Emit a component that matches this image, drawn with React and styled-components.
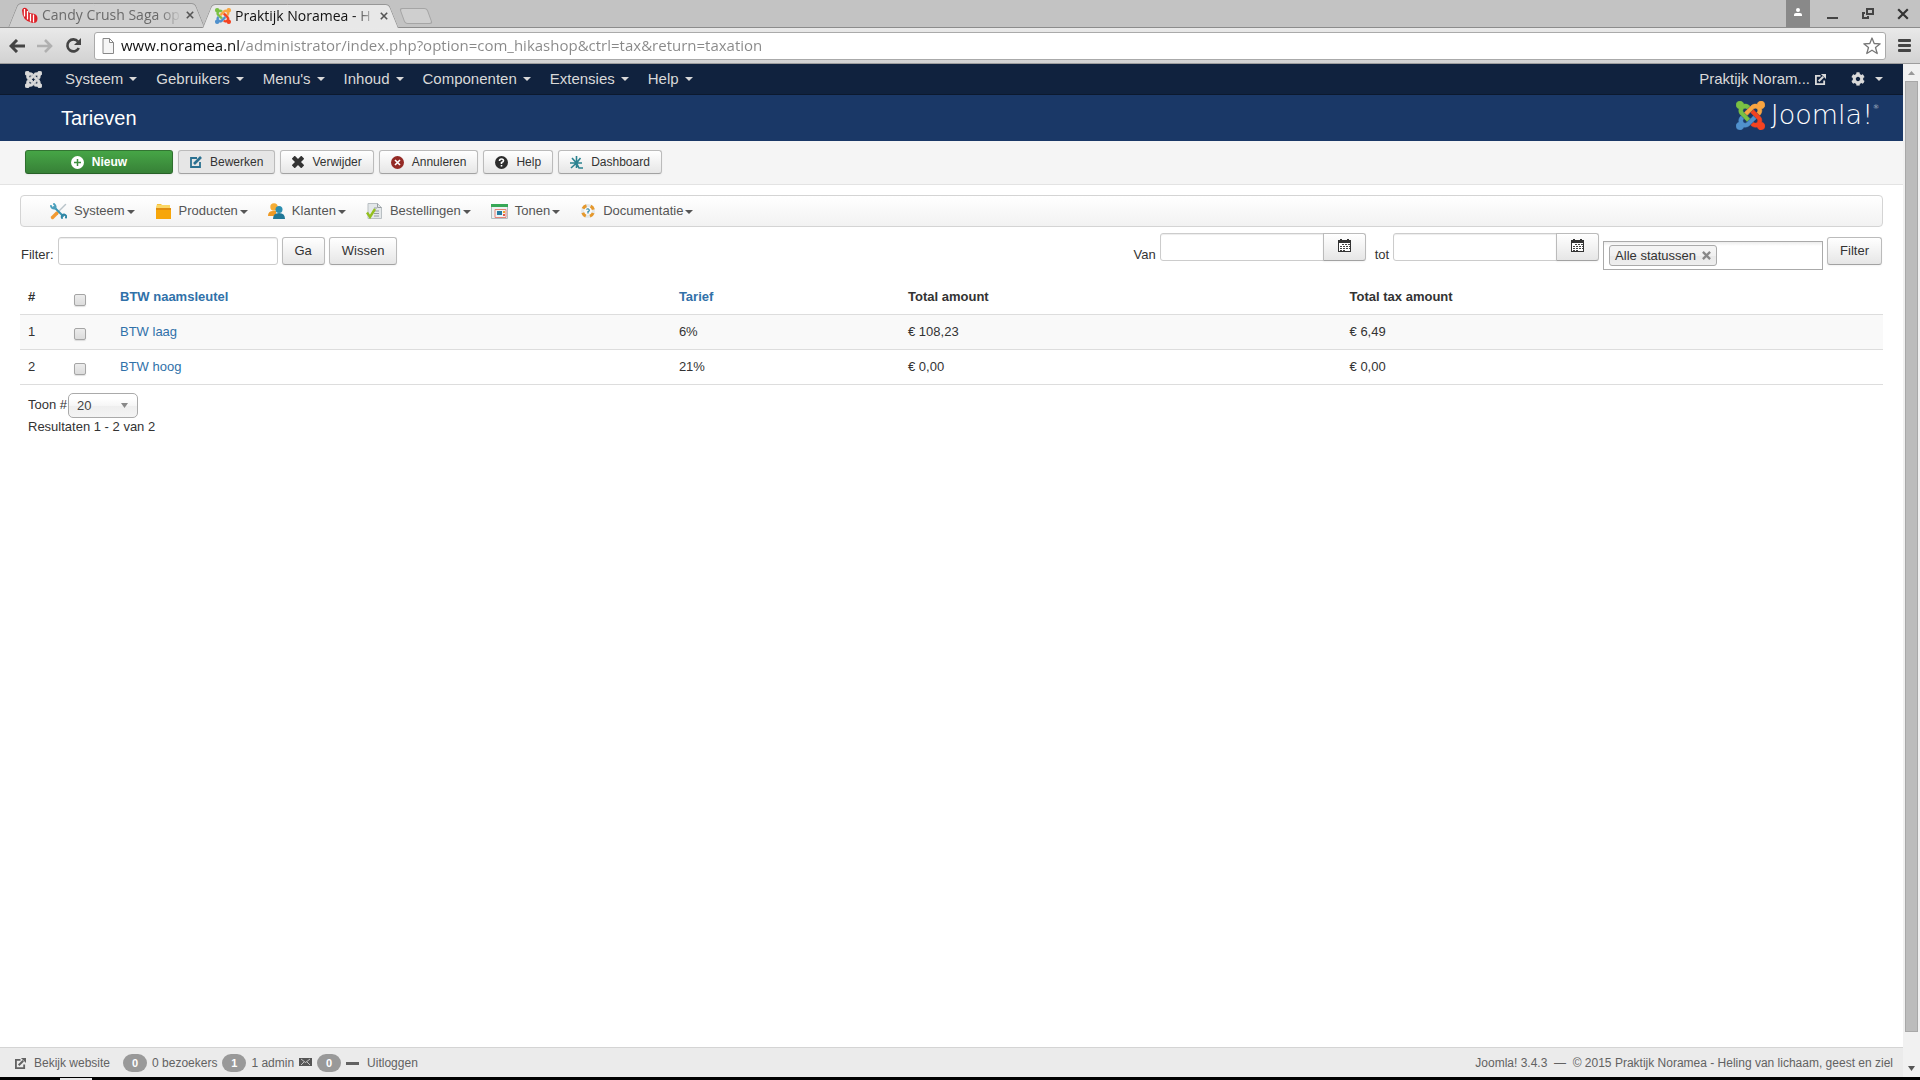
import React from "react";
import styled, { createGlobalStyle } from "styled-components";
import { FaCog } from "react-icons/fa";

const GlobalStyle = createGlobalStyle`
  *, *::before, *::after { box-sizing: border-box; }
  body {
    margin: 0;
    font-family: "Liberation Sans", Arial, sans-serif;
    font-size: 13px;
    line-height: 18px;
    color: #333;
    background: #fff;
    overflow: hidden;
  }
  button, input, select { font-family: inherit; font-size: inherit; color: inherit; margin: 0; }
  a { text-decoration: none; }
  svg { display: block; flex: none; }
`;

const Window = styled.div`
  display: flex;
  flex-direction: column;
  height: 100vh;
`;

/* ---------- Browser frame ---------- */

const TabStrip = styled.div`
  display: flex;
  flex: none;
  justify-content: space-between;
  height: 28px;
  background: #c3c3c3;
  border-bottom: 1px solid #8c8c8c;
  font-family: "Open Sans", "Noto Sans", sans-serif;
`;

const Tabs = styled.div`
  display: flex;
  align-items: flex-end;
  padding-left: 8px;
`;

const Tab = styled.div`
  position: relative;
  z-index: ${(p) => (p.$active ? 2 : 1)};
  display: flex;
  align-items: center;
  gap: 4px;
  width: 197px;
  height: 24px;
  margin-right: -3px;
  margin-bottom: ${(p) => (p.$active ? "-1px" : "0")};
  padding: 0 11px 0 13px;
  color: ${(p) => (p.$active ? "#111" : "#6a6a6a")};

  &::before, &::after {
    content: "";
    position: absolute;
    z-index: -1;
    top: 0;
    bottom: 0;
    width: 52%;
    background: ${(p) => (p.$active ? "#e8e8e8" : "#cfcfcf")};
    border: 0 solid #979797;
    border-top-width: 1px;
  }
  &::before {
    left: 5px;
    transform: skewX(-22deg);
    border-left-width: 1px;
    border-top-left-radius: 4px;
  }
  &::after {
    right: 5px;
    transform: skewX(22deg);
    border-right-width: 1px;
    border-top-right-radius: 4px;
  }
`;

const TabTitle = styled.span`
  flex: 1;
  white-space: nowrap;
  font-size: 14px;
  line-height: 20px;
  mask-image: linear-gradient(90deg, #000 84%, transparent);
`;

const GhostButton = styled.button`
  display: flex;
  align-items: center;
  justify-content: center;
  padding: 0;
  border: 0;
  background: none;
  color: ${(p) => p.$color || "#555"};
`;

const NewTab = styled.button`
  width: 28px;
  height: 16px;
  margin: 0 0 3px 6px;
  padding: 0;
  background: #cfcfcf;
  border: 1px solid #a5a5a5;
  border-radius: 3px;
  transform: skewX(20deg);
`;

const WindowButtons = styled.div`
  display: flex;

  ${GhostButton} { width: 35px; }
  ${GhostButton}:first-child {
    width: 24px;
    margin-right: 5px;
    background: #898989;
  }
`;

const BrowserBar = styled.div`
  display: flex;
  flex: none;
  align-items: center;
  gap: 12px;
  height: 36px;
  padding: 0 9px;
  background: linear-gradient(#e9e9e9, #d2d2d2);
  border-bottom: 1px solid #9d9d9d;
`;

const AddressBox = styled.label`
  display: flex;
  flex: 1;
  align-items: center;
  height: 28px;
  padding: 0 4px 0 7px;
  background: #fff;
  border: 1px solid #aaa;
  border-radius: 3px;
`;

const AddressInput = styled.input`
  flex: 1;
  min-width: 0;
  height: 24px;
  padding: 0 0 2px 6px;
  border: 0;
  outline: 0;
  font-family: "Open Sans", "Noto Sans", sans-serif;
  font-size: 15px;
  color: transparent;
  background: linear-gradient(90deg, #111 0 125px, #888 125px);
  background-clip: text;
`;

const Viewport = styled.div`
  display: flex;
  flex: 1;
  min-height: 0;
`;

const Scrollbar = styled.div`
  display: flex;
  flex-direction: column;
  align-items: center;
  width: 17px;
  background: #f1f1f1;
`;

const ScrollThumb = styled.div`
  flex: 1;
  width: 13px;
  margin-bottom: 28px;
  background: #bcbcbc;
  border: 1px solid #a8a8a8;
`;

const ScrollButton = styled(GhostButton)`
  width: 17px;
  height: 17px;
`;

const Taskbar = styled.div`
  flex: none;
  height: 3px;
  padding: 1px 0 0 60px;
  background: #000;

  &::before {
    content: "";
    display: block;
    width: 32px;
    height: 2px;
    background: #e8e8e8;
  }
`;

/* ---------- Administrator page ---------- */

const Page = styled.div`
  display: flex;
  flex: 1;
  flex-direction: column;
  min-width: 0;
`;

const Caret = styled.span`
  display: inline-block;
  border: 4px solid transparent;
  border-top-color: currentColor;
  border-bottom: 0;
`;

const NavBar = styled.nav`
  display: flex;
  align-items: center;
  height: 31px;
  padding: 0 20px 0 25px;
  background: #10223e;
  border-bottom: 1px solid #0c192e;
  color: #d9d9d9;
  font-size: 15px;
`;

const NavLink = styled.a`
  display: flex;
  align-items: center;
  gap: 6px;
  margin-right: 19px;
  color: inherit;
`;

const HomeLink = styled(NavLink)`
  margin-right: 23px;
`;

const NavRight = styled.div`
  display: flex;
  align-items: center;
  margin-left: auto;

  ${NavLink} { gap: 5px; }
  ${NavLink}:last-child { margin: 0 0 0 6px; gap: 10px; }
`;

const Header = styled.header`
  display: flex;
  align-items: center;
  justify-content: space-between;
  height: 46px;
  padding: 0 24px 0 61px;
  background: #1a3867;
  color: #fff;
`;

const Title = styled.h1`
  margin: 0;
  font-size: 20px;
  line-height: 26px;
  font-weight: 400;
`;

const Brand = styled.a`
  display: flex;
  align-items: center;
  gap: 6px;
  padding-bottom: 6px;
  color: #fff;
`;

const BrandName = styled.span`
  display: flex;
  font-family: "DejaVu Sans", sans-serif;
  font-size: 27px;
  line-height: 30px;
  font-weight: 200;

  sup { font-size: 6px; line-height: 14px; }
`;

const Toolbar = styled.div`
  display: flex;
  gap: 5px;
  padding: 9px 25px;
  height: 44px;
  background: #f5f5f5;
  border-bottom: 1px solid #e3e3e3;
`;

const Button = styled.button`
  display: flex;
  align-items: center;
  justify-content: center;
  height: 28px;
  padding: 0 12px;
  background: linear-gradient(#fff, #e6e6e6);
  border: 1px solid #bbb;
  border-bottom-color: #a2a2a2;
  border-radius: 3px;
  box-shadow: 0 1px 2px rgba(0, 0, 0, 0.05);
  line-height: 18px;
  white-space: nowrap;
`;

const ToolButton = styled(Button)`
  height: 24px;
  gap: 8px;
  padding: 0 11px;
  font-size: 12px;
  ${(p) => p.$pressed && "background: #e6e6e6;"}
  ${(p) =>
    p.$primary &&
    `
    width: 148px;
    color: #fff;
    font-weight: 700;
    background: linear-gradient(#46a546, #378137);
    border-color: #327532 #2f6f2f #276127;
  `}
`;

const Content = styled.main`
  flex: 1;
  padding: 10px 20px 0;
`;

const HikaMenu = styled.nav`
  display: flex;
  gap: 20px;
  height: 32px;
  padding: 0 29px;
  background: linear-gradient(#fff, #f2f2f2);
  border: 1px solid #d4d4d4;
  border-radius: 4px;
`;

const HikaLink = styled.a`
  display: flex;
  align-items: center;
  color: #555;

  svg { margin-right: 7px; }
  ${Caret} { margin: 2px 0 0 2px; border-width: 4px; border-bottom-width: 0; }
`;

const Filters = styled.form`
  display: flex;
  justify-content: space-between;
  padding-top: 6px;
  height: 52px;
`;

const FilterGroup = styled.div`
  display: flex;
  align-items: flex-start;
  gap: 4px;
  padding: ${(p) => (p.$left ? "4px 0 0 1px" : "0 1px 0 0")};
`;

const FieldLabel = styled.label`
  padding-top: ${(p) => (p.$late ? "13px" : "9px")};
  margin-left: ${(p) => (p.$late ? "5px" : "0")};
`;

const TextField = styled.input`
  width: ${(p) => p.$width};
  height: 28px;
  padding: 4px 6px;
  background: #fff;
  border: 1px solid #ccc;
  border-radius: 3px;
  box-shadow: inset 0 1px 1px rgba(0, 0, 0, 0.075);
  outline: 0;
`;

const DateField = styled.div`
  display: flex;

  ${TextField} { border-radius: 3px 0 0 3px; }
  ${Button} {
    width: 43px;
    padding: 0 0 4px;
    margin-left: -1px;
    border-radius: 0 3px 3px 0;
  }
`;

const StatusBox = styled.div`
  display: flex;
  width: 220px;
  height: 29px;
  margin-top: 8px;
  padding: 3px 5px;
  border: 1px solid #aaa;
  background: linear-gradient(#eee 1%, #fff 15%);
`;

const Chip = styled.span`
  display: flex;
  align-items: center;
  gap: 6px;
  height: 21px;
  padding: 0 5px;
  background: linear-gradient(#f4f4f4 20%, #f0f0f0 50%, #e8e8e8 52%, #eee);
  border: 1px solid #aaa;
  border-radius: 3px;
  white-space: nowrap;
`;

const DropdownAligned = styled.div`
  padding-top: 4px;
`;

const Table = styled.table`
  width: 100%;
  table-layout: fixed;
  border-collapse: collapse;

  th, td {
    height: 35px;
    padding: 8px;
    text-align: left;
    line-height: 18px;
    border-bottom: 1px solid #ddd;
  }
  th { padding: 9px 8px 7px; }
  tbody tr:first-child { background: #f9f9f9; }
`;

const Col = styled.col`
  width: ${(p) => p.$width};
`;

const Link = styled.a`
  color: #3071a9;
`;

const Check = styled.input`
  appearance: none;
  display: block;
  width: 12px;
  height: 12px;
  margin: 5px 0 0;
  background: linear-gradient(#ececec, #dcdcdc);
  border: 1px solid #a5a5a5;
  border-radius: 2px;
  box-shadow: 0 1px 1px rgba(0, 0, 0, 0.12);
`;

const Paging = styled.div`
  padding: 8px;
`;

const PagingRow = styled.div`
  display: flex;
  gap: 1px;
  line-height: 24px;
`;

const SelectWrap = styled.span`
  display: flex;
  align-items: center;
  width: 70px;
  height: 25px;
  padding-right: 9px;
  background: linear-gradient(#fff 20%, #f6f6f6 50%, #eee 52%, #f4f4f4);
  border: 1px solid #aaa;
  border-radius: 5px;
  color: #888;
`;

const Select = styled.select`
  appearance: none;
  flex: 1;
  min-width: 0;
  padding: 0 0 0 8px;
  border: 0;
  outline: 0;
  background: none;
  color: #444;
`;

const StatusBar = styled.footer`
  display: flex;
  align-items: center;
  justify-content: space-between;
  height: 30px;
  padding: 1px 10px 0 15px;
  background: #ebebeb;
  border-top: 1px solid #d4d4d4;
  color: #626262;
  font-size: 12px;
`;

const StatusGroup = styled.div`
  display: flex;
  align-items: center;
  gap: 5px;
`;

const StatusLink = styled.a`
  display: flex;
  align-items: center;
  gap: 8px;
  margin-right: ${(p) => (p.$spaced ? "8px" : "0")};
  color: inherit;
`;

const Badge = styled.span`
  width: 24px;
  border-radius: 9px;
  background: #999;
  color: #fff;
  font-size: 11px;
  line-height: 18px;
  font-weight: 700;
  text-align: center;
`;

/* ---------- Drawings ---------- */

const joomlaParts = [
  ["#7ac143", "M.6 92.1C.6 58.8 27.4 32 60.4 32c30 0 54.5 21.9 59.2 50.2 32.6-7.6 67.1.6 96.5 30l-44.3 44.3c-20.5-20.5-42.6-16.3-55.4-3.5-14.3 14.3-14.3 37.9 0 52.2l99.5 99.5-44 44.3c-87.7-87.2-49.7-49.7-99.8-99.7-26.8-26.5-35-64.8-24.8-98.9C20.4 144.6.6 120.7.6 92.1z"],
  ["#f9a541", "M130.1 208.5l44.3 44.3c10-10 89.7-89.7 99.7-99.8 14.3-14.3 37.6-14.3 51.9 0 12.8 12.8 17 35-3.5 55.4l44 44.3c31.2-31.2 38.5-67.6 28.9-101.2 29.2-4.1 51.9-29.2 51.9-59.5 0-33.2-26.8-60.1-59.8-60.1-30.3 0-55.4 22.5-59.5 51.6-33.8-9.9-71.7-1.5-98.3 25.1-18.3 19.1-71.1 71.5-99.6 99.9z"],
  ["#f44321", "M396.4 360.7c8.2-32.7-.9-68.5-26.3-93.9-11.8-12.2 5 4.7-99.5-99.7l-44.3 44.3 99.7 99.7c14.3 14.3 14.3 37.6 0 51.9-12.8 12.8-35 17-55.4-3.5l-44 44.3c27.6 30.2 68 38.8 102.7 28 5.5 27.4 29.7 48.1 58.9 48.1 33 0 59.8-26.8 59.8-60.1 0-30.2-22.5-55-51.6-59.1z"],
  ["#5091cd", "M312.1 307.6l-44-44.3c-87 86.4-50.4 50.4-99.7 99.8-14.3 14.3-37.6 14.3-51.9 0-13.1-13.4-16.9-35.3 3.2-55.4l-44-44.3c-30.2 30.2-38 65.2-29.5 98.3-26.7 6-46.2 29.9-46.2 58.2C0 453.2 26.8 480 59.8 480c28.6 0 52.5-19.8 58.6-46.7 32.7 8.2 68.5-.6 94.2-26 32.1-32 12.2-12.4 99.5-99.7z"],
];

const JoomlaMark = ({ size, mono }) => (
  <svg width={size} height={size} viewBox="0 32 448 448" aria-hidden="true">
    {joomlaParts.map(([fill, d]) => (
      <path key={fill} d={d} fill={mono || fill} stroke={mono || fill} strokeWidth={mono ? 24 : 8} />
    ))}
  </svg>
);

const CandyIcon = () => (
  <svg width="17" height="17" viewBox="0 0 17 17" aria-hidden="true">
    <path d="M1 3q1-3 4-2 2 1 2.500 4 1 1.500 4 1.500 5 .5 5 5 0 5-5 4.500Q1 14 1 3z" fill="#dd1f26" />
    <path d="M3.500 2v7.500M6.500 4v8.500M9.500 7v7.500M12.500 7.500v8" stroke="#fff" strokeWidth="1.300" />
  </svg>
);

const CrossIcon = ({ size = 8, width = 2 }) => (
  <svg width={size} height={size} viewBox="0 0 10 10" stroke="currentColor" strokeWidth={width} aria-hidden="true">
    <path d="M1 1l8 8M9 1l-8 8" />
  </svg>
);

const BackIcon = () => (
  <svg width="16" height="14" viewBox="0 0 16 14" fill="none" stroke="currentColor" strokeWidth="3" aria-hidden="true">
    <path d="M8 1L2 7l6 6M2 7h14" />
  </svg>
);

const ForwardIcon = () => (
  <svg width="16" height="14" viewBox="0 0 16 14" fill="none" stroke="currentColor" strokeWidth="2.6" aria-hidden="true">
    <path d="M8 1l6 6-6 6M14 7H0" />
  </svg>
);

const ReloadIcon = () => (
  <svg width="17" height="17" viewBox="0 0 17 17" aria-hidden="true">
    <path d="M13 4.500A6 6 0 1 0 13.800 11" fill="none" stroke="currentColor" strokeWidth="2.600" />
    <path d="M16 1v7H9z" fill="currentColor" />
  </svg>
);

const PageIcon = () => (
  <svg width="13" height="16" viewBox="0 0 13 16" fill="#f6f6f6" stroke="#888" aria-hidden="true">
    <path d="M1 .5h6.500l4 4v11H1zM7.500.5v4h4" />
  </svg>
);

const StarIcon = () => (
  <svg width="18" height="18" viewBox="0 0 18 18" fill="#fff" stroke="#777" strokeWidth="1.300" strokeLinejoin="round" aria-hidden="true">
    <path d="M9 1l2.200 5.500 6 .3-4.700 3.700 1.700 6L9 13.200l-5.200 3.300 1.700-6L.8 6.800l6-.3z" />
  </svg>
);

const BarsIcon = () => (
  <svg width="13" height="14" viewBox="0 0 13 14" fill="#444" aria-hidden="true">
    <rect width="13" height="3" rx="1" />
    <rect y="5" width="13" height="3" rx="1" />
    <rect y="10" width="13" height="3" rx="1" />
  </svg>
);

const PersonIcon = () => (
  <svg width="8" height="12" viewBox="0 0 8 12" fill="#fff" aria-hidden="true">
    <circle cx="4" cy="2" r="2" />
    <path d="M0 8V6.500Q0 5 2 5h4q2 0 2 1.500V8z" />
  </svg>
);

const RestoreIcon = () => (
  <svg width="12" height="12" viewBox="0 0 12 12" fill="none" stroke="#444" strokeWidth="2" aria-hidden="true">
    <path d="M5 1h6v5H5zM3 5H1v5h5V8" />
  </svg>
);

const ExternalIcon = ({ size = 11 }) => (
  <svg width={size} height={size} viewBox="0 0 12 12" fill="none" stroke="currentColor" strokeWidth="2" aria-hidden="true">
    <path d="M6 2H1v9h9V7" />
    <path d="M4 8l5-5" strokeWidth="2.200" />
    <path d="M6.500 0H12v5.500z" fill="currentColor" stroke="none" />
  </svg>
);

const PlusIcon = () => (
  <svg width="13" height="13" viewBox="0 0 13 13" aria-hidden="true">
    <circle cx="6.500" cy="6.500" r="6.500" fill="#fff" />
    <path d="M6.500 3v7M3 6.500h7" stroke="#3d8f3d" strokeWidth="1.500" />
  </svg>
);

const EditIcon = () => (
  <svg width="12" height="12" viewBox="0 0 12 12" fill="none" stroke="#2a7090" aria-hidden="true">
    <path d="M7 2H1v9h9V6" strokeWidth="1.800" />
    <path d="M4 8l7-7" strokeWidth="2.600" />
  </svg>
);

const CancelIcon = () => (
  <svg width="13" height="13" viewBox="0 0 13 13" aria-hidden="true">
    <circle cx="6.500" cy="6.500" r="6.500" fill="#942a25" />
    <path d="M4 4l5 5M9 4l-5 5" stroke="#fff" strokeWidth="1.600" />
  </svg>
);

const HelpIcon = () => (
  <svg width="13" height="13" viewBox="0 0 13 13" fill="none" aria-hidden="true">
    <circle cx="6.500" cy="6.500" r="6.500" fill="#2d2d2d" />
    <path d="M4.500 5q0-2 2-2t2 1.800Q8.500 6 6.500 6.500V8M6.500 9v1.500" stroke="#fff" strokeWidth="1.600" />
  </svg>
);

const DashboardIcon = () => (
  <svg width="13" height="14" viewBox="0 0 13 14" fill="none" stroke="#2b8290" strokeWidth="1.600" aria-hidden="true">
    <path d="M6.500 1v12M0 8h12M2 3l4.500 5 4-5M1 13l5.500-5 2.500 5h4" />
  </svg>
);

const ToolsIcon = () => (
  <svg width="17" height="17" viewBox="0 0 17 17" fill="none" strokeLinecap="round" aria-hidden="true">
    <path d="M15.500 1.500L8 9" stroke="#b9c4ca" strokeWidth="1.500" />
    <path d="M7 10l-4.500 4.500" stroke="#f29a33" strokeWidth="3.400" />
    <path d="M4 4l9 9" stroke="#3b93b0" strokeWidth="2" />
    <path d="M1 3q1 3 4 2.500Q6.500 3 4 1" stroke="#4ba0bd" strokeWidth="2" />
    <path d="M12 15q-1-3 2-3.500 3 1 2 3" stroke="#2f86a5" strokeWidth="2" />
  </svg>
);

const BoxIcon = () => (
  <svg width="17" height="17" viewBox="0 0 17 17" aria-hidden="true">
    <path d="M2 1h4l1 1h8v5H1z" fill="#f7c33c" />
    <path d="M1 5l1-3h13v3z" fill="#fbd765" />
    <path d="M1 5h15v11H1z" fill="#f7a60a" />
    <path d="M1 5h15v2H1z" fill="#e08d12" />
  </svg>
);

const PeopleIcon = () => (
  <svg width="17" height="17" viewBox="0 0 17 17" aria-hidden="true">
    <circle cx="6" cy="4" r="3.700" fill="#f5ad35" />
    <path d="M0 13q0-5 5-5h3v5z" fill="#ee9a25" />
    <circle cx="11" cy="6.500" r="3.500" fill="#2b8eb0" />
    <path d="M5 16q0-6 6-6t6 6z" fill="#1f7797" />
  </svg>
);

const OrderIcon = () => (
  <svg width="17" height="17" viewBox="0 0 17 17" fill="none" aria-hidden="true">
    <path d="M2 .5h9.500l4 4v11H2z" fill="#e3e7e9" stroke="#b9bfc3" />
    <path d="M11.500.5v4h4M8 5h3M8 8h5M8 10.500h5M8 13h5" stroke="#969da1" />
    <path d="M1 9.500l3 4.500 5-8" stroke="#93bf1f" strokeWidth="2.400" />
  </svg>
);

const DisplayIcon = () => (
  <svg width="17" height="17" viewBox="0 0 17 17" fill="none" aria-hidden="true">
    <path d="M.5 1.500h16v14H.5z" fill="#edf1f2" stroke="#b4bdc0" />
    <path d="M0 2.500h17" stroke="#38a857" strokeWidth="3" />
    <path d="M4 6.500h11v8H4z" stroke="#e58277" />
    <path d="M6 8h5v4H6z" fill="#247ba0" />
    <path d="M12 8h2v2h-2z" fill="#f0a32c" />
    <path d="M12 11h2v2h-2z" fill="#e05a4c" />
  </svg>
);

const BuoyIcon = () => (
  <svg width="16" height="16" viewBox="0 0 16 16" fill="none" aria-hidden="true">
    <circle cx="8" cy="8" r="5.500" stroke="#e4e8ea" strokeWidth="3" />
    <circle cx="8" cy="8" r="5.500" stroke="#e5982c" strokeWidth="3" strokeDasharray="4.300 4.340" strokeDashoffset="-2.100" />
    <path d="M6.500 6.500q1.500-1.500 2.500 0T8 8.500v2" stroke="#2b86a5" strokeWidth="1.200" />
  </svg>
);

const CalendarIcon = () => (
  <svg width="13" height="13" viewBox="0 0 13 13" aria-hidden="true">
    <path d="M0 1h2V0h2v1h5V0h2v1h2v12H0z" fill="#333" />
    <path d="M1 4h11v8H1z" fill="#fff" />
    <path d="M4 5.500h8M2 7.500h10M2 9.500h10M2 11.500h6" stroke="#444" strokeDasharray="2 1" />
  </svg>
);

const MailIcon = () => (
  <svg width="13" height="12" viewBox="0 -1 13 12" aria-hidden="true">
    <path d="M0 0h13v8H0z" fill="#555" />
    <path d="M2 1l4.500 3.500L11 1M2 7l3-3M11 7L8 4" fill="none" stroke="#ddd" strokeWidth=".8" />
  </svg>
);

const Line = ({ width, height, color }) => (
  <svg width={width} height={height} aria-hidden="true">
    <rect width={width} height={height} fill={color} />
  </svg>
);

const MinimizeIcon = () => (
  <svg width="11" height="12" viewBox="0 0 11 12" aria-hidden="true">
    <rect y="9" width="11" height="2" fill="#444" />
  </svg>
);

const Triangle = ({ up, color = "#555", size = 7 }) => (
  <svg width={size} height="5" viewBox="0 0 7 5" preserveAspectRatio="none" fill={color} aria-hidden="true">
    <path d={up ? "M0 5l3.500-4L7 5z" : "M0 0l3.500 5L7 0z"} />
  </svg>
);

/* ---------- Data ---------- */

const navItems = ["Systeem", "Gebruikers", "Menu's", "Inhoud", "Componenten", "Extensies", "Help"];

const tools = [
  { label: "Nieuw", icon: <PlusIcon />, primary: true },
  { label: "Bewerken", icon: <EditIcon />, pressed: true },
  { label: "Verwijder", icon: <CrossIcon size={12} width={3.6} /> },
  { label: "Annuleren", icon: <CancelIcon /> },
  { label: "Help", icon: <HelpIcon /> },
  { label: "Dashboard", icon: <DashboardIcon /> },
];

const hikaItems = [
  ["Systeem", ToolsIcon],
  ["Producten", BoxIcon],
  ["Klanten", PeopleIcon],
  ["Bestellingen", OrderIcon],
  ["Tonen", DisplayIcon],
  ["Documentatie", BuoyIcon],
];

const rates = [
  { name: "BTW laag", rate: "6%", total: "€ 108,23", tax: "€ 6,49" },
  { name: "BTW hoog", rate: "21%", total: "€ 0,00", tax: "€ 0,00" },
];

/* ---------- Page ---------- */

const BrowserTop = () => (
  <>
    <TabStrip>
      <Tabs>
        <Tab>
          <CandyIcon />
          <TabTitle>Candy Crush Saga op</TabTitle>
          <GhostButton aria-label="Close tab"><CrossIcon /></GhostButton>
        </Tab>
        <Tab $active>
          <JoomlaMark size={16} />
          <TabTitle>Praktijk Noramea - H</TabTitle>
          <GhostButton aria-label="Close tab"><CrossIcon /></GhostButton>
        </Tab>
        <NewTab aria-label="New tab" />
      </Tabs>
      <WindowButtons>
        <GhostButton aria-label="Profile"><PersonIcon /></GhostButton>
        <GhostButton aria-label="Minimize"><MinimizeIcon /></GhostButton>
        <GhostButton aria-label="Restore"><RestoreIcon /></GhostButton>
        <GhostButton aria-label="Close" $color="#333"><CrossIcon size={12} width={1.8} /></GhostButton>
      </WindowButtons>
    </TabStrip>
    <BrowserBar>
      <GhostButton aria-label="Back" $color="#444"><BackIcon /></GhostButton>
      <GhostButton aria-label="Forward" $color="#b0b0b0"><ForwardIcon /></GhostButton>
      <GhostButton aria-label="Reload" $color="#444"><ReloadIcon /></GhostButton>
      <AddressBox>
        <PageIcon />
        <AddressInput
          aria-label="Address"
          defaultValue="www.noramea.nl/administrator/index.php?option=com_hikashop&ctrl=tax&return=taxation"
        />
        <StarIcon />
      </AddressBox>
      <GhostButton aria-label="Menu"><BarsIcon /></GhostButton>
    </BrowserBar>
  </>
);

const FilterBar = () => (
  <Filters onSubmit={(e) => e.preventDefault()}>
    <FilterGroup $left>
      <FieldLabel htmlFor="search">Filter:</FieldLabel>
      <TextField id="search" $width="220px" />
      <Button>Ga</Button>
      <Button type="button">Wissen</Button>
    </FilterGroup>
    <FilterGroup>
      <FieldLabel $late htmlFor="from">Van</FieldLabel>
      <DateField>
        <TextField id="from" $width="164px" />
        <Button type="button" aria-label="Kies begindatum"><CalendarIcon /></Button>
      </DateField>
      <FieldLabel $late htmlFor="until">tot</FieldLabel>
      <DateField>
        <TextField id="until" $width="164px" />
        <Button type="button" aria-label="Kies einddatum"><CalendarIcon /></Button>
      </DateField>
      <StatusBox>
        <Chip>
          Alle statussen
          <GhostButton type="button" aria-label="Verwijder status" $color="#888">
            <CrossIcon size={9} width={2.6} />
          </GhostButton>
        </Chip>
      </StatusBox>
      <DropdownAligned>
        <Button>Filter</Button>
      </DropdownAligned>
    </FilterGroup>
  </Filters>
);

const RateTable = () => (
  <Table>
    <colgroup>
      <Col $width="46px" />
      <Col $width="46px" />
      <Col $width="30%" />
      <Col $width="12.3%" />
      <Col $width="23.7%" />
      <Col />
    </colgroup>
    <thead>
      <tr>
        <th>#</th>
        <th><Check type="checkbox" aria-label="Alles selecteren" /></th>
        <th><Link href="#name">BTW naamsleutel</Link></th>
        <th><Link href="#rate">Tarief</Link></th>
        <th>Total amount</th>
        <th>Total tax amount</th>
      </tr>
    </thead>
    <tbody>
      {rates.map((r, i) => (
        <tr key={r.name}>
          <td>{i + 1}</td>
          <td><Check type="checkbox" aria-label={r.name} /></td>
          <td><Link href="#edit">{r.name}</Link></td>
          <td>{r.rate}</td>
          <td>{r.total}</td>
          <td>{r.tax}</td>
        </tr>
      ))}
    </tbody>
  </Table>
);

export default function App() {
  return (
    <Window>
      <GlobalStyle />
      <BrowserTop />
      <Viewport>
        <Page>
          <NavBar>
            <HomeLink href="#home" aria-label="Joomla"><JoomlaMark size={17} mono="#d9d9d9" /></HomeLink>
            {navItems.map((item) => (
              <NavLink key={item} href="#menu">{item}<Caret /></NavLink>
            ))}
            <NavRight>
              <NavLink href="#site">Praktijk Noram...<ExternalIcon /></NavLink>
              <NavLink href="#user" aria-label="Gebruiker"><FaCog size={14} /><Caret /></NavLink>
            </NavRight>
          </NavBar>
          <Header>
            <Title>Tarieven</Title>
            <Brand href="#joomla">
              <JoomlaMark size={29} />
              <BrandName>Joomla!<sup>®</sup></BrandName>
            </Brand>
          </Header>
          <Toolbar>
            {tools.map((t) => (
              <ToolButton key={t.label} $primary={t.primary} $pressed={t.pressed}>{t.icon}{t.label}</ToolButton>
            ))}
          </Toolbar>
          <Content>
            <HikaMenu>
              {hikaItems.map(([label, Icon]) => (
                <HikaLink key={label} href="#hika"><Icon />{label}<Caret /></HikaLink>
              ))}
            </HikaMenu>
            <FilterBar />
            <RateTable />
            <Paging>
              <PagingRow>
                <label htmlFor="limit">Toon #</label>
                <SelectWrap>
                  <Select id="limit" defaultValue="20"><option>20</option></Select>
                  <Triangle color="#888" />
                </SelectWrap>
              </PagingRow>
              <div>Resultaten 1 - 2 van 2</div>
            </Paging>
          </Content>
          <StatusBar>
            <StatusGroup>
              <StatusLink $spaced href="#view"><ExternalIcon />Bekijk website</StatusLink>
              <Badge>0</Badge>
              <span>0 bezoekers</span>
              <Badge>1</Badge>
              <span>1 admin</span>
              <MailIcon />
              <Badge>0</Badge>
              <StatusLink href="#logout"><Line width={13} height={3} color="#626262" />Uitloggen</StatusLink>
            </StatusGroup>
            <span>Joomla! 3.4.3 &nbsp;—&nbsp; © 2015 Praktijk Noramea - Heling van lichaam, geest en ziel</span>
          </StatusBar>
        </Page>
        <Scrollbar>
          <ScrollButton aria-label="Omhoog"><Triangle up color="#999" /></ScrollButton>
          <ScrollThumb />
          <ScrollButton aria-label="Omlaag"><Triangle /></ScrollButton>
        </Scrollbar>
      </Viewport>
      <Taskbar />
    </Window>
  );
}
